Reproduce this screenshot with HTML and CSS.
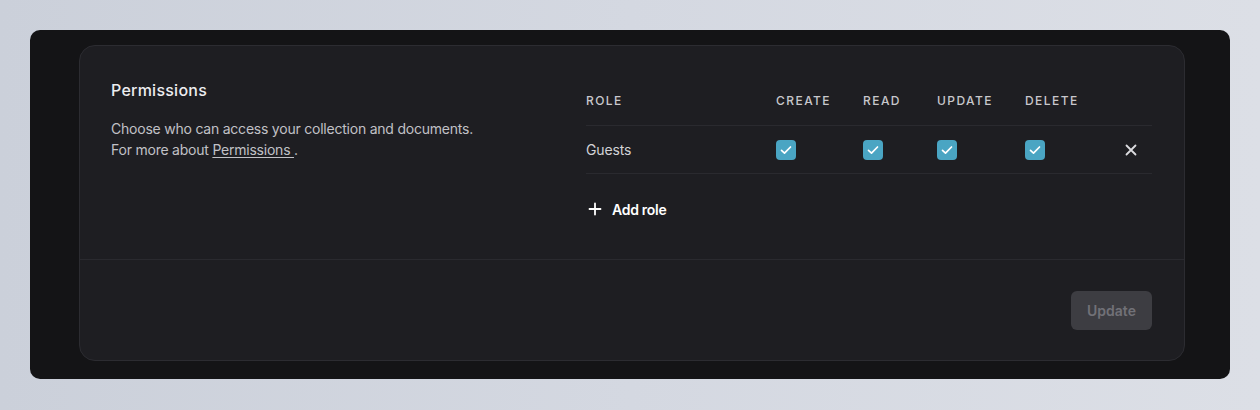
FILE: index.html
```html
<!DOCTYPE html>
<html lang="en">
<head>
<meta charset="utf-8">
<title>Permissions</title>
<link rel="stylesheet" href="styles.css">
</head>
<body>
<div class="frame">
  <section class="card">
    <div class="card-body">
      <div class="intro">
        <h2 class="title">Permissions</h2>
        <p class="desc">Choose who can access your collection and documents.<br>For more about <a class="link" href="#">Permissions </a>.</p>
      </div>
      <div class="perms">
        <div class="row head">
          <div class="cell">Role</div>
          <div class="cell">Create</div>
          <div class="cell">Read</div>
          <div class="cell">Update</div>
          <div class="cell">Delete</div>
          <div class="cell"></div>
        </div>
        <div class="row">
          <div class="cell role">Guests</div>
          <div class="cell"><span class="check"><svg viewBox="0 0 20 20" width="20" height="20"><path d="M5.5 10.3l3 2.9 6-6.2" fill="none" stroke="#fff" stroke-width="1.7" stroke-linecap="round" stroke-linejoin="round"/></svg></span></div>
          <div class="cell"><span class="check"><svg viewBox="0 0 20 20" width="20" height="20"><path d="M5.5 10.3l3 2.9 6-6.2" fill="none" stroke="#fff" stroke-width="1.7" stroke-linecap="round" stroke-linejoin="round"/></svg></span></div>
          <div class="cell"><span class="check"><svg viewBox="0 0 20 20" width="20" height="20"><path d="M5.5 10.3l3 2.9 6-6.2" fill="none" stroke="#fff" stroke-width="1.7" stroke-linecap="round" stroke-linejoin="round"/></svg></span></div>
          <div class="cell"><span class="check"><svg viewBox="0 0 20 20" width="20" height="20"><path d="M5.5 10.3l3 2.9 6-6.2" fill="none" stroke="#fff" stroke-width="1.7" stroke-linecap="round" stroke-linejoin="round"/></svg></span></div>
          <div class="cell remove"><svg viewBox="0 0 12 12" width="12" height="12"><path d="M1.5 1.5l9 9M10.5 1.5l-9 9" fill="none" stroke="#dcdce0" stroke-width="1.8" stroke-linecap="round"/></svg></div>
        </div>
        <button class="add" type="button"><svg viewBox="0 0 14 14" width="14" height="14"><path d="M7 1.5v11M1.5 7h11" fill="none" stroke="#fff" stroke-width="1.8" stroke-linecap="round"/></svg><span>Add role</span></button>
      </div>
    </div>
    <div class="card-foot">
      <button class="update" type="button" disabled>Update</button>
    </div>
  </section>
</div>
</body>
</html>
```

FILE: styles.css
```css
* { box-sizing: border-box; }
html, body { margin: 0; padding: 0; }
body {
  width: 1260px;
  height: 410px;
  overflow: hidden;
  background: linear-gradient(90deg, #cbd0da 0%, #d4d8e1 50%, #dcdfe6 100%);
  font-family: Inter, "Noto Sans", sans-serif;
  padding: 30px;
}
.frame {
  width: 1200px;
  height: 349px;
  background: #141416;
  border-radius: 10px;
  padding: 15px 45px 0 49px;
}
.card {
  height: 316px;
  background: #1e1e22;
  border: 1px solid #2c2c31;
  border-radius: 16px;
  display: flex;
  flex-direction: column;
}
.card-body {
  display: flex;
  padding: 32px 32px 0 31px;
  height: 214px;
  border-bottom: 1px solid #2a2a2f;
}
.intro { flex: 1; }
.title {
  margin: 0;
  font-size: 16px;
  line-height: 24px;
  font-weight: 500;
  letter-spacing: 0.015em;
  color: #ededf0;
}
.desc {
  margin: 16px 0 0;
  font-size: 14px;
  line-height: 21px;
  letter-spacing: -0.016em;
  color: #c1c1c6;
}
.link { color: #c1c1c6; text-decoration: underline; text-underline-offset: 2px; }
.perms { width: 566px; }
.row {
  display: grid;
  grid-template-columns: 190px 87px 74px 88px 85px 42px;
  height: 48px;
  align-items: center;
  border-bottom: 1px solid #2a2a2f;
}
.head .cell {
  font-size: 12px;
  font-weight: 500;
  text-transform: uppercase;
  letter-spacing: 0.12em;
  color: #c8c8cc;
  padding-bottom: 2px;
}
.role { font-size: 14px; color: #d2d2d6; letter-spacing: -0.01em; }
.check {
  display: block;
  width: 20px;
  height: 20px;
  border-radius: 4px;
  background: #4aa5c3;
}
.check svg { display: block; }
.remove { display: flex; justify-content: center; }
.remove svg { display: block; }
.add {
  margin-top: 18px;
  display: flex;
  align-items: center;
  gap: 10px;
  background: none;
  border: 0;
  padding: 0 0 0 2px;
  height: 34px;
  font-family: inherit;
  font-size: 14px;
  font-weight: 600;
  letter-spacing: -0.02em;
  color: #ffffff;
}
.add svg { display: block; }
.card-foot {
  display: flex;
  justify-content: flex-end;
  padding: 31px 32px 0;
}
.update {
  width: 81px;
  height: 39px;
  border: 0;
  border-radius: 6px;
  background: #3d3d42;
  color: #717177;
  font-family: inherit;
  font-size: 14px;
  font-weight: 600;
}
```
